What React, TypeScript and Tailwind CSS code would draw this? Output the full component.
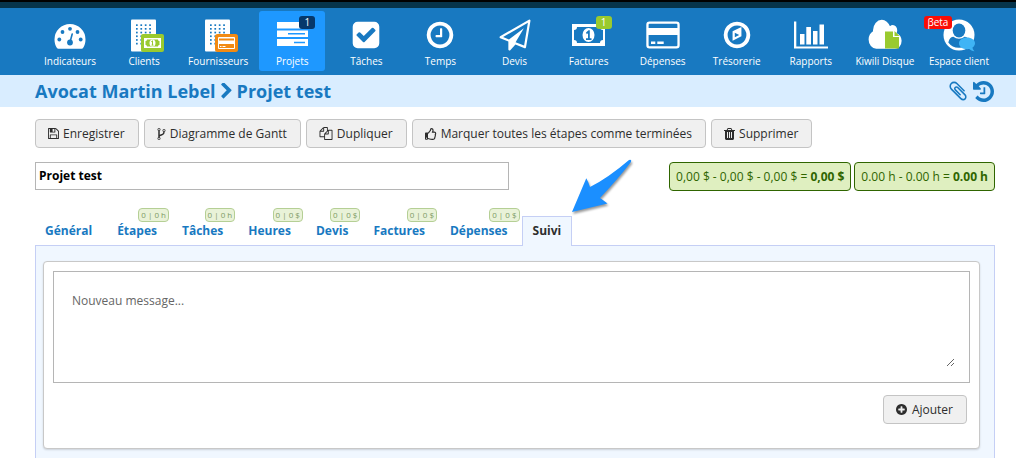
import React from "react";
import { FaRegThumbsUp } from "react-icons/fa";

const Glyph = ({ d, className, box = "0 0 1792 1792" }: { d: string; className: string; box?: string }) => (
  <svg viewBox={box} className={className} fill="currentColor" aria-hidden="true">
    <path d={d} />
  </svg>
);

const paths = {
  save: "M512 1536h768v-384h-768v384zm896 0h128v-896q0-14-10-38.500t-20-34.500l-281-281q-10-10-34-20t-39-10v416q0 40-28 68t-68 28h-576q-40 0-68-28t-28-68v-416h-128v1280h128v-416q0-40 28-68t68-28h832q40 0 68 28t28 68v416zm-384-928v-320q0-13-9.500-22.500t-22.500-9.500h-192q-13 0-22.500 9.500t-9.500 22.500v320q0 13 9.500 22.500t22.500 9.500h192q13 0 22.500-9.500t9.500-22.500zm640 32v928q0 40-28 68t-68 28h-1344q-40 0-68-28t-28-68v-1344q0-40 28-68t68-28h928q40 0 88 20t76 48l280 280q28 28 48 76t20 88z",
  fork: "M672 1472q0-40-28-68t-68-28-68 28-28 68 28 68 68 28 68-28 28-68zm0-1152q0-40-28-68t-68-28-68 28-28 68 28 68 68 28 68-28 28-68zm640 128q0-40-28-68t-68-28-68 28-28 68 28 68 68 28 68-28 28-68zm96 0q0 52-26 96.500t-70 69.500q-2 287-226 414-67 38-203 81-128 40-169.500 71t-41.500 100v26q44 25 70 69.500t26 96.500q0 80-56 136t-136 56-136-56-56-136q0-52 26-96.500t70-69.500v-820q-44-25-70-69.500t-26-96.500q0-80 56-136t136-56 136 56 56 136q0 52-26 96.500t-70 69.500v497q54-26 154-57 55-17 87.500-29.500t70.500-31 59-39.500 40.500-51 28-69.500 8.500-91.500q-44-25-70-69.500t-26-96.500q0-80 56-136t136-56 136 56 56 136z",
  copy: "M1696 384q40 0 68 28t28 68v1216q0 40-28 68t-68 28h-960q-40 0-68-28t-28-68v-288h-544q-40 0-68-28t-28-68v-672q0-40 20-88t48-76l408-408q28-28 76-48t88-20h416q40 0 68 28t28 68v328q68-40 128-40h416zm-544 213l-299 299h299v-299zm-640-384l-299 299h299v-299zm196 647l316-316v-416h-384v416q0 40-28 68t-68 28h-416v640h512v-256q0-40 20-88t48-76zm956 804v-1152h-384v416q0 40-28 68t-68 28h-416v640h896z",
  trash: "M704 1376v-704q0-14-9-23t-23-9h-64q-14 0-23 9t-9 23v704q0 14 9 23t23 9h64q14 0 23-9t9-23zm256 0v-704q0-14-9-23t-23-9h-64q-14 0-23 9t-9 23v704q0 14 9 23t23 9h64q14 0 23-9t9-23zm256 0v-704q0-14-9-23t-23-9h-64q-14 0-23 9t-9 23v704q0 14 9 23t23 9h64q14 0 23-9t9-23zm-544-992h448l-48-117q-7-9-17-11h-317q-10 2-17 11zm928 32v64q0 14-9 23t-23 9h-96v948q0 83-47 143.500t-113 60.500h-832q-66 0-113-58.500t-47-141.500v-952h-96q-14 0-23-9t-9-23v-64q0-14 9-23t23-9h309l70-167q15-37 54-63t79-26h320q40 0 79 26t54 63l70 167h309q14 0 23 9t9 23z",
  plus: "M1344 960v-128q0-26-19-45t-45-19h-256v-256q0-26-19-45t-45-19h-128q-26 0-45 19t-19 45v256h-256q-26 0-45 19t-19 45v128q0 26 19 45t45 19h256v256q0 26 19 45t45 19h128q26 0 45-19t19-45v-256h256q26 0 45-19t19-45zm320-64q0 209-103 385.500t-279.500 279.500-385.500 103-385.500-103-279.500-279.500-103-385.500 103-385.500 279.500-279.500 385.500-103 385.500 103 279.500 279.500 103 385.500z",
  history: "M1664 896q0 156-61 298t-164 245-245 164-298 61q-172 0-327-72.500t-264-204.500q-7-10-6.500-22.500t8.500-20.500l137-138q10-9 25-9 16 2 23 12 73 95 179 147t225 52q104 0 198.500-40.500t163.500-109.500 109.500-163.500 40.500-198.500-40.500-198.500-109.500-163.500-163.500-109.500-198.500-40.500q-98 0-188 35.500t-160 101.500l137 138q31 30 14 69-17 40-59 40h-448q-26 0-45-19t-19-45v-448q0-42 40-59 39-17 69 14l130 129q107-101 244.500-156.500t284.500-55.500q156 0 298 61t245 164 164 245 61 298zm-640-288v448q0 14-9 23t-23 9h-320q-14 0-23-9t-9-23v-64q0-14 9-23t23-9h224v-352q0-14 9-23t23-9h64q14 0 23 9t9 23z",
  clip: "M1596 1385q0 117-79 196t-196 79q-135 0-235-100l-777-776q-113-115-113-271 0-159 110-270t269-111q158 0 273 113l605 606q10 10 10 22 0 16-30.500 46.500t-46.500 30.500q-13 0-23-10l-606-607q-79-77-181-77-106 0-179 75t-73 181q0 105 76 181l776 777q63 63 145 63 64 0 106-42t42-106q0-82-63-145l-581-581q-26-24-60-24-29 0-48 19t-19 48q0 32 25 59l410 410q10 10 10 22 0 16-31 47t-47 31q-12 0-22-10l-410-410q-63-61-63-149 0-82 57-139t139-57q88 0 149 63l581 581q100 98 100 235z",
  plane: "M1764 11q33 24 27 64l-256 1536q-5 29-32 45-14 8-31 8-11 0-24-5l-527-215-298 327q-18 21-47 21-14 0-23-4-19-7-30-23.500t-11-36.500v-452l-472-193q-37-14-40-55-3-39 32-59l1664-960q35-21 68 2zm-342 1499l221-1323-1434 827 336 137 863-639-478 797z",
  check: "M813 1299l614-614q19-19 19-45t-19-45l-102-102q-19-19-45-19t-45 19l-467 467-211-211q-19-19-45-19t-45 19l-102 102q-19 19-19 45t19 45l358 358q19 19 45 19t45-19zm851-883v960q0 119-84.500 203.500t-203.500 84.500h-960q-119 0-203.500-84.500t-84.500-203.500v-960q0-119 84.500-203.500t203.500-84.500h960q119 0 203.500 84.500t84.500 203.500z",
  clock: "M1024 544v448q0 14-9 23t-23 9h-320q-14 0-23-9t-9-23v-64q0-14 9-23t23-9h224v-352q0-14 9-23t23-9h64q14 0 23 9t9 23zm416 352q0-148-73-273t-198-198-273-73-273 73-198 198-73 273 73 273 198 198 273 73 273-73 198-198 73-273zm224 0q0 209-103 385.500t-279.500 279.500-385.500 103-385.500-103-279.500-279.500-103-385.500 103-385.500 279.500-279.500 385.500-103 385.500 103 279.500 279.500 103 385.500z",
  compass: "M768 1024l256-128-256-128v256zm384-594v542l-512 256v-542zm288 466q0-148-73-273t-198-198-273-73-273 73-198 198-73 273 73 273 198 198 273 73 273-73 198-198 73-273zm224 0q0 209-103 385.500t-279.500 279.500-385.500 103-385.500-103-279.500-279.500-103-385.500 103-385.500 279.500-279.500 385.500-103 385.500 103 279.500 279.500 103 385.500z",
  chevron: "M1363 877l-742 742q-19 19-45 19t-45-19l-166-166q-19-19-19-45t19-45l531-531-531-531q-19-19-19-45t19-45l166-166q19-19 45-19t45 19l742 742q19 19 19 45t-19 45z",
  cloud: "M1984 1152q0 159-112.500 271.500t-271.500 112.500h-1088q-185 0-316.500-131.500t-131.500-316.500q0-132 71-241.500t187-163.500q-2-28-2-43 0-212 150-362t362-150q158 0 286.500 88t187.500 230q70-62 166-62 106 0 181 75t75 181q0 75-41 138 129 30 213 134.500t84 239.500z",
};

const Pic = ({ children }: { children: React.ReactNode }) => (
  <svg viewBox="0 0 40 36" className="h-9 w-10" fill="#fff" aria-hidden="true">
    {children}
  </svg>
);

const At = ({ d, x, y, s, fill = "#fff" }: { d: string; x: number; y: number; s: number; fill?: string }) => (
  <path d={d} fill={fill} fillRule="evenodd" transform={`translate(${x} ${y}) scale(${s / 1792})`} />
);

const NAV = "#1879c1";

const Building = () => (
  <>
    <rect x="7" y="0.5" width="25" height="32" rx="1" />
    {[0, 1, 2, 3, 4, 5].map((r) =>
      [0, 1, 2, 3].map((c) => (
        <rect key={`${r}-${c}`} x={12 + c * 4.4} y={5.3 + r * 3.7} width="1.7" height="1.7" fill={NAV} />
      ))
    )}
  </>
);

const Banknote = () => (
  <>
    <path
      fillRule="evenodd"
      d="M3 5h33v22H3zM8 8a3 3 0 0 1-3 3v10a3 3 0 0 1 3 3h23a3 3 0 0 1 3-3V11a3 3 0 0 1-3-3z"
    />
    <ellipse cx="19.500" cy="16" rx="6" ry="7" />
    <path d="M17 13.500l2.500-2.300h1.300v8h1.700v1.800h-5.500v-1.800H19v-5l-1.200 1z" fill={NAV} />
  </>
);

const icons: Record<string, React.ReactNode> = {
  Indicateurs: (
    <>
      <path d="M4.500 20.500a15.500 15.500 0 0 1 31 0c0 3-.8 6-2.300 8.300-.4.700-.8.900-1.500.9H8.300c-.7 0-1.100-.2-1.500-.9C5.300 26.500 4.500 23.500 4.500 20.500z" />
      <g fill={NAV}>
        <circle cx="9.300" cy="20.500" r="1.900" />
        <circle cx="12.500" cy="13" r="1.900" />
        <circle cx="20" cy="9.800" r="1.900" />
        <circle cx="27.500" cy="13" r="1.900" />
        <circle cx="30.700" cy="20.500" r="1.900" />
        <circle cx="20" cy="23.500" r="2.900" />
      </g>
      <path d="M20.200 22.500l2-7.500" stroke={NAV} strokeWidth="1.600" strokeLinecap="round" />
    </>
  ),
  Clients: (
    <>
      <Building />
      <rect x="17" y="15" width="23" height="18" rx="2" fill="#9aca2e" />
      <rect x="20" y="19" width="17" height="10" />
      <path d="M23 20.500h11c0 1 .8 1.500 1.500 1.500v4c-1 0-1.500.7-1.500 1.500H23c0-1-.7-1.500-1.500-1.500v-4c1 0 1.500-.6 1.500-1.500z" fill="#9aca2e" />
      <ellipse cx="28.500" cy="24" rx="3" ry="3.500" />
      <path d="M27.300 22.700l1.200-.9v4.300m-1 0h2" stroke="#9aca2e" fill="none" />
    </>
  ),
  Fournisseurs: (
    <>
      <Building />
      <rect x="17" y="15" width="23" height="18" rx="2.500" fill="#f28a12" />
      <rect x="20" y="18" width="17" height="12" rx="1" />
      <path d="M21 19.500h15v2H21zM21 25h15v4H21z" fill="#f28a12" />
      <path d="M22 27h1.500v1H22zm2.500 0h3v1h-3z" />
    </>
  ),
  Projets: (
    <>
      <path d="M5 3h31v6.500H5zM5 11.500h31v6.500H5zM5 20h31v7H5z" />
      <path d="M16 14h17v1.400H16zM22 22.800h11v1.400H22z" fill="#1e98ff" />
    </>
  ),
  Tâches: <At d={paths.check} x={4.5} y={0.5} s={31} />,
  Temps: <At d={paths.clock} x={4.5} y={0.5} s={31} />,
  Devis: <At d={paths.plane} x={4.5} y={0.5} s={31} />,
  Factures: <Banknote />,
  Dépenses: (
    <path
      fillRule="evenodd"
      d="M6.500 2.500h27a3.200 3.200 0 0 1 3.200 3.200v20.600a3.200 3.200 0 0 1-3.200 3.200h-27a3.200 3.200 0 0 1-3.200-3.200V5.700a3.200 3.200 0 0 1 3.200-3.200zm0 2.300a.9.900 0 0 0-.9.900V9h28.800V5.700a.9.900 0 0 0-.9-.9zM5.600 16v10.300c0 .5.400.9.900.9h27c.5 0 .9-.4.900-.9V16zM8 22.500h4.300V25H8zm6.300 0h6.400V25h-6.400z"
    />
  ),
  Trésorerie: <At d={paths.compass} x={4.5} y={0.5} s={31} />,
  Rapports: (
    <path d="M3 2.500h2.300V27.500H37v2H3zM9 15h4.500v10.500H9zM15.300 8H20v17.500h-4.700zM22 12h4.500v13.500H22zM28.500 5.500H33v20h-4.500z" />
  ),
  "Kiwili Disque": (
    <>
      <g transform="translate(2.500 -1.800) scale(.0172 .0205)">
        <path d={paths.cloud} />
      </g>
      <path d="M20 12.500h8v5.500h6v11.500H20z" fill="#9aca2e" />
      <path d="M29.500 12l5 5h-5z" fill="#9aca2e" />
    </>
  ),
  "Espace client": (
    <>
      <circle cx="20" cy="16" r="15.500" />
      <ellipse cx="20" cy="11.500" rx="6.300" ry="7" fill={NAV} />
      <path d="M9.300 23.500c1-4 3-5.700 5.200-5.700 1.500 1.300 3.300 2 5.500 2s4-.7 5.500-2c2.200 0 4.200 1.700 5.200 5.700A13 13 0 0 1 20 28.700 13 13 0 0 1 9.300 23.500z" fill={NAV} />
      <path d="M28 18.500c4.500 0 8 2.500 8 5.700 0 1.700-.9 3.200-2.500 4.300.2 1.500.8 2.500 2 3.700-2.200 0-4-1-5.200-2.200-6.200.8-10.300-2-10.300-5.800 0-3.200 3.500-5.700 8-5.700z" fill="#3fb4f5" />
    </>
  ),
};

const marks: Record<string, { text: string; className: string }> = {
  Projets: { text: "1", className: "left-10 w-4 bg-[#06386b]" },
  Factures: { text: "1", className: "left-10 w-4 bg-[#9aca2e]" },
  "Espace client": { text: "βeta", className: "-left-0.5 w-7 bg-[#fb0d05]" },
};

const Button = ({ icon, children }: { icon: React.ReactNode; children: React.ReactNode }) => (
  <button
    type="button"
    className="flex h-[29px] items-center gap-1 rounded border border-[#c4c4c4] bg-[#f0f0f0] pr-[13px] pl-3 text-xs text-[#2d2d2d]"
  >
    {icon}
    <span>{children}</span>
  </button>
);

const tabs = [
  { label: "Général" },
  { label: "Étapes", count: "0 | 0 h" },
  { label: "Tâches", count: "0 | 0 h" },
  { label: "Heures", count: "0 | 0 $" },
  { label: "Devis", count: "0 | 0 $" },
  { label: "Factures", count: "0 | 0 $" },
  { label: "Dépenses", count: "0 | 0 $" },
  { label: "Suivi", active: true },
];

export default function App() {
  return (
    <div className="flex h-screen flex-col overflow-hidden bg-white font-['Open_Sans','Noto_Sans',sans-serif] text-[#2d2d2d]">
      <div className="h-2 shrink-0 border-t-2 border-black bg-[#06344b]" />

      <nav className="flex shrink-0 bg-[#1879c1] pt-[3px] pr-5 pb-1 pl-[33px]">
        {Object.keys(icons).map((label) => (
          <a
            key={label}
            href="#"
            className={`relative mx-1 flex h-[60px] flex-1 basis-0 flex-col items-center rounded-[3px] pt-2 text-white ${
              label === "Projets" ? "bg-[#1e98ff]" : ""
            }`}
          >
            <Pic>{icons[label]}</Pic>
            <span className="text-[10px] leading-3 font-medium whitespace-nowrap">{label}</span>
            {marks[label] && (
              <span
                className={`absolute top-[5px] h-[13px] rounded-[3px] text-center text-[10px] leading-3 font-medium ${marks[label].className}`}
              >
                {marks[label].text}
              </span>
            )}
          </a>
        ))}
      </nav>

      <header className="flex h-8 shrink-0 items-center bg-[#d9edff] pr-[22px] pl-[35px] text-[#1879c1]">
        <h1 className="flex items-center gap-1 text-lg font-bold">
          <span>Avocat Martin Lebel</span>
          <Glyph d={paths.chevron} box="300 100 1150 1600" className="h-4 w-[13px]" />
          <span>Projet test</span>
        </h1>
        <div className="ml-auto flex items-center gap-1">
          <button type="button" aria-label="Pièces jointes">
            <Glyph d={paths.clip} className="size-[22px]" />
          </button>
          <button type="button" aria-label="Historique">
            <Glyph d={paths.history} box="128 128 1536 1536" className="size-[21px]" />
          </button>
        </div>
      </header>

      <main className="flex min-h-0 flex-1 flex-col pt-3 pr-[21px] pl-[35px]">
        <div className="flex shrink-0 gap-[5px]">
          <Button icon={<Glyph d={paths.save} box="128 128 1536 1536" className="size-[11px]" />}>Enregistrer</Button>
          <Button icon={<Glyph d={paths.fork} box="384 128 1024 1536" className="h-3 w-[9px]" />}>Diagramme de Gantt</Button>
          <Button icon={<Glyph d={paths.copy} className="h-[13px] w-3.5" />}>Dupliquer</Button>
          <Button icon={<FaRegThumbsUp className="size-3" />}>Marquer toutes les étapes comme terminées</Button>
          <Button icon={<Glyph d={paths.trash} box="192 128 1408 1536" className="h-3 w-[11px]" />}>Supprimer</Button>
        </div>

        <div className="mt-3.5 flex shrink-0 items-start justify-between">
          <input
            aria-label="Nom du projet"
            defaultValue="Projet test"
            className="h-7 w-[474px] border border-[#b5b5b5] px-[3px] pb-0.5 text-xs font-bold text-black"
          />
          <div className="flex gap-[3px] text-xs whitespace-nowrap text-[#2f6500]">
            <div className="flex h-[29px] items-center rounded border border-[#2f6500] bg-[#dfefc0] px-1.5">
              <span>0,00 $ - 0,00 $ - 0,00 $ = <b>0,00 $</b></span>
            </div>
            <div className="flex h-[29px] items-center rounded border border-[#2f6500] bg-[#dfefc0] px-1.5">
              <span>0.00 h - 0.00 h = <b>0.00 h</b></span>
            </div>
          </div>
        </div>

        <div className="relative z-10 mt-[25px] -mb-px -ml-px flex shrink-0 gap-[3px]">
          {tabs.map((t) => (
            <a
              key={t.label}
              href="#"
              className={`relative h-[30px] border border-b-0 px-2.5 text-xs leading-[28px] font-bold ${
                t.active ? "border-[#c5cff5] bg-[#f0f7ff] text-[#2d2d2d]" : "border-transparent text-[#1879c1]"
              }`}
            >
              {t.label}
              {t.count && (
                <span className="absolute -top-[9px] -right-0.5 h-3.5 rounded-sm border border-[#b5cf95] bg-[#e9f2d8] px-0.5 text-[8px] leading-3 font-normal whitespace-nowrap text-[#7e9a66]">
                  {t.count}
                </span>
              )}
            </a>
          ))}
          <svg viewBox="0 0 64 58" className="absolute -top-[58px] left-[536px] h-[58px] w-16" aria-hidden="true">
            <path
              d="M2 54L16.300 20.200Q18 23 20 29Q38 20 59 2Q62 1 61 4Q48 21 30 40Q33 42 37.500 45.500Z"
              fill="#1b8fff"
              className="drop-shadow-[1px_2px_1px_rgba(0,0,0,0.4)]"
            />
          </svg>
        </div>

        <section className="flex-1 border border-b-0 border-[#c5cff5] bg-[#f0f7ff] pt-[15px] pr-3.5 pl-[7px]">
          <form className="rounded border border-[#c8c8c8] bg-white px-[9px] pt-[9px] pb-6 shadow-[0_1px_2px_rgba(0,0,0,0.15)]">
            <div className="border border-[#b5b5b5] px-3.5 pt-3.5 pb-[15px]">
              <textarea
                aria-label="Nouveau message"
                placeholder="Nouveau message..."
                className="block h-[81px] w-full resize px-1 pt-[7px] text-xs placeholder:text-[#666]"
              />
            </div>
            <div className="mt-3 flex justify-end pr-[3px]">
              <Button icon={<Glyph d={paths.plus} box="128 128 1536 1536" className="mr-px size-[11px]" />}>Ajouter</Button>
            </div>
          </form>
        </section>
      </main>
    </div>
  );
}
